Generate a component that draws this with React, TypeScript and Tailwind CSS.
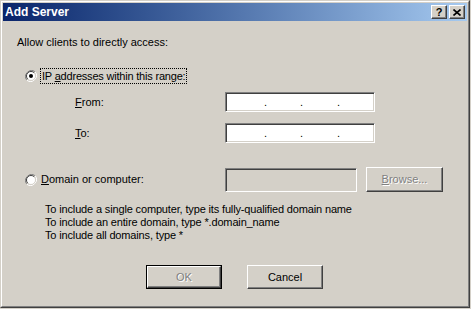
import React from 'react';

const font = "font-['Liberation_Sans',Arial,sans-serif]";
const raised =
  'border border-t-white border-l-white border-r-[#404040] border-b-[#404040] shadow-[inset_-1px_-1px_0_#808080,inset_1px_1px_0_#d4d0c8]';
const sunken =
  'border border-t-[#808080] border-l-[#808080] border-r-white border-b-white shadow-[inset_1px_1px_0_#404040,inset_-1px_-1px_0_#d4d0c8]';
const disabledText = 'text-[#808080] [text-shadow:1px_1px_0_#fff]';

const Radio = ({ checked }: { checked?: boolean }) => (
  <svg width="12" height="12" viewBox="0 0 12 12">
    <path d="M10.2 1.8A6 6 0 0 0 1.8 10.2" fill="none" stroke="#808080" strokeWidth="1" />
    <path d="M1.8 10.2A6 6 0 0 0 10.2 1.8" fill="none" stroke="#fff" strokeWidth="1" />
    <circle cx="6" cy="6" r="4.5" fill="#fff" />
    <path d="M9.2 2.8A4.5 4.5 0 0 0 2.8 9.2" fill="none" stroke="#404040" strokeWidth="1" />
    <path d="M2.8 9.2A4.5 4.5 0 0 0 9.2 2.8" fill="none" stroke="#d4d0c8" strokeWidth="1" />
    {checked && <circle cx="6" cy="6" r="2" fill="#000" />}
  </svg>
);

const IpField = () => (
  <div className={`w-[150px] h-[20px] bg-white ${sunken} flex items-center text-[11px] leading-none`}>
    <span className="w-[38px]" />
    <span className="w-[3px]">.</span>
    <span className="w-[33px]" />
    <span className="w-[3px]">.</span>
    <span className="w-[34px]" />
    <span className="w-[3px]">.</span>
  </div>
);

const TitleButton = ({ children }: { children: React.ReactNode }) => (
  <div className={`w-[16px] h-[14px] bg-[#d4d0c8] ${raised} flex items-center justify-center text-[11px] font-bold text-black leading-none`}>
    {children}
  </div>
);

export default function App() {
  return (
    <div className={`w-[471px] h-[309px] overflow-hidden bg-[#d4d0c8] ${font}`}>
      <div className="w-[470px] h-[308px] border border-t-[#d4d0c8] border-l-[#d4d0c8] border-r-[#404040] border-b-[#404040]">
        <div className="h-full border border-t-white border-l-white border-r-[#808080] border-b-[#808080] p-px flex flex-col">
          {/* Title bar */}
          <div className="h-[18px] bg-gradient-to-r from-[#0a246a] to-[#a6caf0] flex items-center justify-between pl-[2px] pr-[2px]">
            <span className="text-white font-bold text-[12px] leading-none">Add Server</span>
            <div className="flex gap-[2px]">
              <TitleButton>?</TitleButton>
              <TitleButton>
                <svg width="8" height="7" viewBox="0 0 8 7">
                  <path d="M0.5 0.5L7.5 6.5M7.5 0.5L0.5 6.5" stroke="#000" strokeWidth="1.6" />
                </svg>
              </TitleButton>
            </div>
          </div>

          {/* Body */}
          <div className="flex flex-col text-[11px] text-black">
            <div className="mt-[14px] pl-[14px] h-[14px] leading-[14px]">Allow clients to directly access:</div>

            <div className="mt-[19px] pl-[22px] h-[16px] flex items-center">
              <Radio checked />
              <span className="ml-[3px] px-px h-[16px] leading-[14px] border border-dotted border-black tracking-[-0.2px]">
                IP <u>a</u>ddresses within this range:
              </span>
            </div>

            <div className="mt-[8px] pl-[72px] flex items-center">
              <span className="w-[150px]"><u>F</u>rom:</span>
              <IpField />
            </div>

            <div className="mt-[11px] pl-[72px] flex items-center">
              <span className="w-[150px]"><u>T</u>o:</span>
              <IpField />
            </div>

            <div className="mt-[24px] pl-[22px] flex items-center">
              <Radio />
              <span className="ml-[4px] w-[184px]"><u>D</u>omain or computer:</span>
              <div className={`w-[132px] h-[24px] bg-[#d4d0c8] ${sunken}`} />
              <div className={`ml-[9px] w-[77px] h-[25px] bg-[#d4d0c8] ${raised} flex items-center justify-center ${disabledText}`}>
                <span><u>B</u>rowse...</span>
              </div>
            </div>

            <div className="mt-[11px] pl-[42px] leading-[13px] tracking-[-0.15px]">
              <div>To include a single computer, type its fully-qualified domain name</div>
              <div>To include an entire domain, type *.domain_name</div>
              <div>To include all domains, type *</div>
            </div>

            <div className="mt-[23px] pl-[143px] flex gap-[25px]">
              <div className="w-[76px] h-[24px] border border-black">
                <div className={`h-full bg-[#d4d0c8] ${raised} flex items-center justify-center ${disabledText}`}>OK</div>
              </div>
              <div className={`w-[76px] h-[24px] bg-[#d4d0c8] ${raised} flex items-center justify-center`}>Cancel</div>
            </div>
          </div>
        </div>
      </div>
    </div>
  );
}
